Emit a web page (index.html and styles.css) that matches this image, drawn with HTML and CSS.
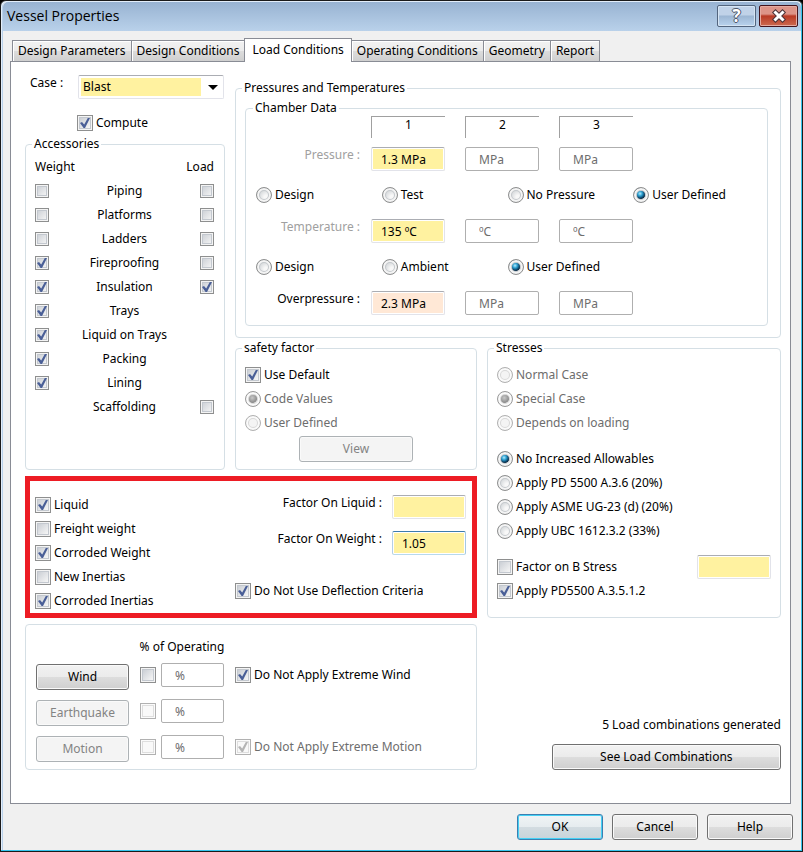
FILE: index.html
```html
<!DOCTYPE html>
<html lang="en">
<head>
<meta charset="utf-8">
<title>Vessel Properties</title>
<link rel="stylesheet" href="styles.css">
</head>
<body>
<div class="window">
  <header class="titlebar">
    <h1>Vessel Properties</h1>
    <button type="button" class="caption-btn" aria-label="Help">?</button>
    <button type="button" class="caption-btn close" aria-label="Close">
      <svg width="16" height="14" viewBox="0 0 16 14"><path d="M4.500 3.500 L11.500 10.500 M11.500 3.500 L4.500 10.500" stroke="#4b3338" stroke-width="5" stroke-linecap="square"/><path d="M4.500 3.500 L11.500 10.500 M11.500 3.500 L4.500 10.500" stroke="#fff" stroke-width="3" stroke-linecap="square"/></svg>
    </button>
  </header>

  <nav class="tabs" role="tablist">
    <button type="button" role="tab" class="tab">Design Parameters</button>
    <button type="button" role="tab" class="tab">Design Conditions</button>
    <button type="button" role="tab" class="tab active" aria-selected="true">Load Conditions</button>
    <button type="button" role="tab" class="tab">Operating Conditions</button>
    <button type="button" role="tab" class="tab">Geometry</button>
    <button type="button" role="tab" class="tab">Report</button>
  </nav>

  <main class="panel">
    <div class="side">
      <div class="case-row">
        <label for="case">Case :</label>
        <span class="combo"><select id="case"><option>Blast</option></select></span>
      </div>
      <label class="option compute"><input type="checkbox" checked>Compute</label>
      <fieldset class="accessories">
        <legend>Accessories</legend>
        <table>
          <thead><tr><th>Weight</th><th></th><th>Load</th></tr></thead>
          <tbody>
            <tr><td><input type="checkbox" aria-label="Piping weight"></td><td>Piping</td><td><input type="checkbox" aria-label="Piping load"></td></tr>
            <tr><td><input type="checkbox" aria-label="Platforms weight"></td><td>Platforms</td><td><input type="checkbox" aria-label="Platforms load"></td></tr>
            <tr><td><input type="checkbox" aria-label="Ladders weight"></td><td>Ladders</td><td><input type="checkbox" aria-label="Ladders load"></td></tr>
            <tr><td><input type="checkbox" aria-label="Fireproofing weight" checked></td><td>Fireproofing</td><td><input type="checkbox" aria-label="Fireproofing load"></td></tr>
            <tr><td><input type="checkbox" aria-label="Insulation weight" checked></td><td>Insulation</td><td><input type="checkbox" aria-label="Insulation load" checked></td></tr>
            <tr><td><input type="checkbox" aria-label="Trays weight" checked></td><td>Trays</td><td></td></tr>
            <tr><td><input type="checkbox" aria-label="Liquid on Trays weight" checked></td><td>Liquid on Trays</td><td></td></tr>
            <tr><td><input type="checkbox" aria-label="Packing weight" checked></td><td>Packing</td><td></td></tr>
            <tr><td><input type="checkbox" aria-label="Lining weight" checked></td><td>Lining</td><td></td></tr>
            <tr><td></td><td>Scaffolding</td><td><input type="checkbox" aria-label="Scaffolding load"></td></tr>
          </tbody>
        </table>
      </fieldset>
    </div>

    <fieldset class="pressures">
      <legend>Pressures and Temperatures</legend>
      <fieldset class="chamber">
        <legend>Chamber Data</legend>
        <div class="chamber-row head">
          <span class="row-label"></span>
          <div class="fields"><span class="col-head">1</span><span class="col-head">2</span><span class="col-head">3</span></div>
        </div>
        <div class="chamber-row">
          <label class="row-label muted" for="p1">Pressure :</label>
          <div class="fields">
            <input class="field" type="text" id="p1" value="1.3 MPa">
            <input class="field unit" type="text" aria-label="Pressure 2" value="MPa" disabled>
            <input class="field unit" type="text" aria-label="Pressure 3" value="MPa" disabled>
          </div>
        </div>
        <div class="radio-row">
          <label class="option"><input type="radio" name="pressure">Design</label>
          <label class="option"><input type="radio" name="pressure">Test</label>
          <label class="option"><input type="radio" name="pressure">No Pressure</label>
          <label class="option"><input type="radio" name="pressure" checked>User Defined</label>
        </div>
        <div class="chamber-row">
          <label class="row-label muted" for="t1">Temperature :</label>
          <div class="fields">
            <input class="field" type="text" id="t1" value="135 ºC">
            <input class="field unit" type="text" aria-label="Temperature 2" value="ºC" disabled>
            <input class="field unit" type="text" aria-label="Temperature 3" value="ºC" disabled>
          </div>
        </div>
        <div class="radio-row">
          <label class="option"><input type="radio" name="temperature">Design</label>
          <label class="option"><input type="radio" name="temperature">Ambient</label>
          <label class="option"><input type="radio" name="temperature" checked>User Defined</label>
        </div>
        <div class="chamber-row">
          <label class="row-label" for="o1">Overpressure :</label>
          <div class="fields">
            <input class="field over" type="text" id="o1" value="2.3 MPa">
            <input class="field unit" type="text" aria-label="Overpressure 2" value="MPa" disabled>
            <input class="field unit" type="text" aria-label="Overpressure 3" value="MPa" disabled>
          </div>
        </div>
      </fieldset>
    </fieldset>

    <fieldset class="safety">
      <legend>safety factor</legend>
      <label class="option"><input type="checkbox" checked>Use Default</label>
      <label class="option"><input type="radio" name="safety" checked disabled>Code Values</label>
      <label class="option"><input type="radio" name="safety" disabled>User Defined</label>
      <button type="button" class="btn view" disabled>View</button>
    </fieldset>

    <fieldset class="stresses">
      <legend>Stresses</legend>
      <div class="group">
        <label class="option"><input type="radio" name="stress" disabled>Normal Case</label>
        <label class="option"><input type="radio" name="stress" checked disabled>Special Case</label>
        <label class="option"><input type="radio" name="stress" disabled>Depends on loading</label>
      </div>
      <div class="group">
        <label class="option"><input type="radio" name="allow" checked>No Increased Allowables</label>
        <label class="option"><input type="radio" name="allow">Apply PD 5500 A.3.6 (20%)</label>
        <label class="option"><input type="radio" name="allow">Apply ASME UG-23 (d) (20%)</label>
        <label class="option"><input type="radio" name="allow">Apply UBC 1612.3.2 (33%)</label>
      </div>
      <div class="group">
        <div class="split">
          <label class="option"><input type="checkbox">Factor on B Stress</label>
          <input class="field" type="text" aria-label="Factor on B Stress value">
        </div>
        <label class="option"><input type="checkbox" checked>Apply PD5500 A.3.5.1.2</label>
      </div>
    </fieldset>

    <section class="weights">
      <div>
        <label class="option"><input type="checkbox" checked>Liquid</label>
        <label class="option"><input type="checkbox">Freight weight</label>
        <label class="option"><input type="checkbox" checked>Corroded Weight</label>
        <label class="option"><input type="checkbox">New Inertias</label>
        <label class="option"><input type="checkbox" checked>Corroded Inertias</label>
      </div>
      <div class="factors">
        <div class="factor"><label for="fl">Factor On Liquid :</label><input class="field" type="text" id="fl"></div>
        <div class="factor"><label for="fw">Factor On Weight :</label><input class="field current" type="text" id="fw" value="1.05"></div>
        <label class="option"><input type="checkbox" checked>Do Not Use Deflection Criteria</label>
      </div>
    </section>

    <section class="forces">
      <span></span><span class="forces-head">% of Operating</span><span></span>
      <button type="button" class="btn">Wind</button>
      <span class="percent"><input type="checkbox" aria-label="Use wind percentage"><input class="field unit" type="text" aria-label="Wind percentage" value="%" disabled></span>
      <label class="option"><input type="checkbox" checked>Do Not Apply Extreme Wind</label>
      <button type="button" class="btn" disabled>Earthquake</button>
      <span class="percent"><input type="checkbox" aria-label="Use earthquake percentage" disabled><input class="field unit" type="text" aria-label="Earthquake percentage" value="%" disabled></span>
      <span></span>
      <button type="button" class="btn" disabled>Motion</button>
      <span class="percent"><input type="checkbox" aria-label="Use motion percentage" disabled><input class="field unit" type="text" aria-label="Motion percentage" value="%" disabled></span>
      <label class="option"><input type="checkbox" checked disabled>Do Not Apply Extreme Motion</label>
    </section>

    <section class="summary">
      <p>5 Load combinations generated</p>
      <button type="button" class="btn">See Load Combinations</button>
    </section>
  </main>

  <footer class="actions">
    <button type="button" class="btn default">OK</button>
    <button type="button" class="btn">Cancel</button>
    <button type="button" class="btn">Help</button>
  </footer>
</div>
</body>
</html>
```
FILE: styles.css
```css
* { box-sizing: border-box; }

body {
  margin: 0;
  background: #000;
}

body, button, input, select {
  font-family: "Noto Sans", "Open Sans", sans-serif;
  font-size: 12px;
  line-height: 16px;
  color: #000;
}

.window {
  display: flex;
  flex-direction: column;
  min-height: 100vh;
  border: 1px solid #1a1a1a;
  border-radius: 6px 6px 0 0;
  background: #f0f0f0;
  box-shadow: inset -1px -1px #35c5ee, inset 1px 1px #e3eefa, inset 2px 0 #b9d1ea;
}

/* Title bar */
.titlebar {
  display: flex;
  gap: 3px;
  height: 29px;
  margin: 1px 1px 0 2px;
  padding: 3px 3px 0 4px;
  border-radius: 5px 5px 0 0;
  background: linear-gradient(#98b3d2, #b9d1ea);
}
.titlebar h1 {
  flex: 1;
  margin: 0;
  font: 400 14px/22px "Open Sans", "Noto Sans", sans-serif;
}
.caption-btn {
  display: flex;
  align-items: center;
  justify-content: center;
  width: 39px;
  height: 22px;
  padding: 0;
  border: 1px solid #53657e;
  border-radius: 2px;
  background: linear-gradient(#c0d2e8 45%, #9cb6d3 50%, #b9d3ee);
  box-shadow: inset 0 0 0 1px #d5e4f3;
  color: #fff;
  font: 700 17px/20px "Open Sans", sans-serif;
  text-shadow: 1px 0 #4c5567, -1px 0 #4c5567, 0 1px #4c5567, 0 -1px #4c5567;
}
.caption-btn.close {
  border-color: #43131c;
  background: linear-gradient(#dd9488 40%, #b93a25 50%, #cc6a50);
  box-shadow: inset 0 0 0 1px #e5aaa0;
}

/* Tabs */
.tabs {
  display: flex;
  align-items: flex-end;
  margin: 7px 12px 0 11px;
}
.tab {
  height: 21px;
  padding: 0 5px;
  border: 1px solid #898c95;
  border-bottom: 0;
  background: linear-gradient(#f2f2f2, #ebebeb 50%, #dddddd 50%, #cfcfcf);
  box-shadow: inset 1px 1px #fff;
  white-space: nowrap;
}
.tab + .tab { margin-left: -1px; }
.tab.active {
  height: 24px;
  margin: 0 0 -1px -1px;
  padding: 0 7px 1px;
  background: #fff;
  z-index: 1;
}

.panel {
  display: grid;
  grid-template-columns: 200fr 242fr 294fr;
  grid-template-rows: auto auto auto auto 1fr;
  gap: 2px 10px;
  flex: 1;
  margin: 0 11px 0 9px;
  padding: 13px 9px 0 14px;
  border: 1px solid #898c95;
  background: #fff;
}

fieldset {
  min-width: 0;
  margin: 0;
  padding: 0;
  border: 1px solid #d5dfe5;
  border-radius: 4px;
}
legend {
  margin-left: -3px;
  padding: 0 2px;
  line-height: 16px;
}

/* Check boxes and radio buttons */
input[type="checkbox"], input[type="radio"] {
  appearance: none;
  display: block;
  flex: none;
  width: 16px;
  height: 16px;
  margin: 0;
  border: 1px solid #8e8f8f;
}
input[type="checkbox"] {
  padding: 2px;
  background: linear-gradient(135deg, #cbcfd5, #f6f6f6) content-box, #f4f4f4;
  box-shadow: inset 0 0 0 1px #f4f4f4, inset 0 0 0 2px #c3c8cf;
}
input[type="checkbox"]:checked::before {
  content: "";
  display: block;
  height: 100%;
  background: #4a5f97;
  clip-path: polygon(0 50%, 20% 40%, 42% 65%, 78% 0, 100% 0, 50% 100%, 36% 100%);
}
input[type="radio"] {
  border-radius: 50%;
  background: radial-gradient(circle at 65% 65%, #f8f8f8 15%, #cfd3d6 65%);
  box-shadow: inset 0 0 0 2px #f4f4f4, inset 0 0 0 3px #c4c8cc;
}
input[type="radio"]:checked {
  background: radial-gradient(circle at 43% 40%, #b5ecff 0, #2b9fd0 20%, #0d4468 38%, #0c2a42 46%, #e0e4e8 52%);
}
input:disabled[type="checkbox"], input:disabled[type="radio"] { border-color: #b1b1b1; }
input:disabled[type="checkbox"] {
  background: #f9f9f9;
  box-shadow: inset 0 0 0 1px #fbfbfb, inset 0 0 0 2px #dedede;
}
input:disabled[type="checkbox"]::before { background: #b5b5b5; }
input:disabled[type="radio"] {
  background: #f4f4f4;
  box-shadow: inset 0 0 0 2px #fafafa, inset 0 0 0 3px #d8d8d8;
}
input:disabled[type="radio"]:checked {
  border-color: #9a9a9a;
  background: radial-gradient(circle at 45% 42%, #c8c8c8 0, #8c8c8c 42%, #f4f4f4 50%);
}

.option {
  display: flex;
  align-items: center;
  gap: 3px;
  height: 24px;
  white-space: nowrap;
}
.option:has(input:disabled) { color: #6d6d6d; }

/* Text fields */
.field {
  flex: none;
  width: 74px;
  height: 24px;
  padding: 0 9px;
  border: 1px solid #e2e3ea;
  border-top-color: #abadb3;
  border-radius: 2px;
  background: #fff2a0;
  box-shadow: inset 0 0 0 1px #fff;
}
.field.over { background: #ffe8d6; }
.field.current { border-color: #3d7bad #a4c9e3 #b7d9ed #b5cfe7; }
.field.unit {
  padding: 0 13px;
  border-color: #afafaf;
  background: #fff;
  color: #6d6d6d;
}

/* Push buttons */
.btn {
  height: 26px;
  padding: 0 8px;
  border: 1px solid #707070;
  border-radius: 3px;
  background: linear-gradient(#f2f2f2, #ebebeb 50%, #dddddd 50%, #cfcfcf);
  box-shadow: inset 0 0 0 1px #fafafa;
}
.btn:disabled {
  border-color: #adb2b5;
  background: #f4f4f4;
  color: #838383;
}
.btn.default {
  border-color: #3c7fb1;
  background: linear-gradient(#f0f4f6, #e6ecef 50%, #d3dce1 50%, #c8d4da);
  box-shadow: inset 0 0 0 1px #45d1f5;
}

/* Case and accessories */
.side {
  grid-area: 1 / 1 / 3 / 2;
  display: flex;
  flex-direction: column;
}
.case-row {
  display: flex;
  gap: 11px;
  padding: 0 1px 0 5px;
}
.combo {
  position: relative;
  flex: 0 1 146px;
  margin-left: auto;
}
.combo select {
  appearance: none;
  display: block;
  width: 100%;
  height: 24px;
  padding: 0 24px 0 4px;
  border: 1px solid #e2e3ea;
  border-top-color: #abadb3;
  border-radius: 2px;
  background: linear-gradient(#fff2a0, #fff2a0) 2px 2px / calc(100% - 24px) 18px no-repeat #fff;
}
.combo::after {
  content: "";
  position: absolute;
  top: 10px;
  right: 6px;
  border: 5px solid transparent;
  border-top-color: #000;
  border-bottom: 0;
  pointer-events: none;
}
.compute {
  margin: 12px 0 0 52px;
}
.accessories {
  flex: 1;
  margin-top: 1px;
  padding: 3px 10px 0 9px;
}
.accessories table {
  width: 100%;
  border-collapse: collapse;
}
.accessories th, .accessories td {
  height: 24px;
  padding: 0;
  font-weight: 400;
  text-align: center;
}
.accessories th:first-child { width: 44px; text-align: left; }
.accessories th:last-child { width: 44px; text-align: right; }
.accessories input[type="checkbox"] {
  width: 14px;
  height: 14px;
  padding: 1px;
}
.accessories td:last-child input { margin-left: auto; }

/* Pressures and temperatures */
.pressures {
  grid-area: 1 / 2 / 2 / 4;
  margin-top: 5px;
  padding: 4px 12px 11px 9px;
}
.chamber { padding: 0 8px 10px 10px; }
.chamber-row {
  display: flex;
  gap: 11px;
  margin-bottom: 12px;
}
.chamber-row.head { margin-bottom: 9px; }
.chamber-row:last-child { margin-bottom: 0; }
.row-label {
  width: 104px;
  text-align: right;
  white-space: nowrap;
}
.muted { color: #a0a0a0; }
.fields { display: flex; gap: 20px; }
.col-head {
  width: 74px;
  height: 22px;
  border: 1px solid #a0a0a0;
  border-width: 1px 0 0 1px;
  text-align: center;
}
.radio-row {
  display: grid;
  grid-template-columns: repeat(4, 1fr);
  margin-bottom: 12px;
}

/* Safety factor */
.safety {
  grid-area: 2 / 2;
  padding: 7px 9px;
}
.safety .view {
  display: block;
  width: 114px;
  margin: 1px auto 0;
}

/* Stresses */
.stresses {
  grid-area: 2 / 3 / 4 / 4;
  padding: 7px 9px 0;
}
.group { margin-bottom: 12px; }
.split {
  display: flex;
  justify-content: space-between;
}

/* Liquid and weight factors */
.weights {
  grid-area: 3 / 1 / 4 / 3;
  display: grid;
  grid-template-columns: 200fr 231fr;
  margin-top: 4px;
  padding: 12px 6px 0 5px;
  border: 5px solid #ed1c24;
}
.factors { padding-top: 2px; }
.factor {
  display: flex;
  justify-content: flex-end;
  gap: 10px;
  margin-bottom: 12px;
}
.factors .option { margin-top: 24px; }

/* Wind, earthquake and motion */
.forces {
  grid-area: 4 / 1 / 5 / 3;
  display: grid;
  grid-template-columns: 93px 84px 1fr;
  grid-template-rows: 24px 36px 36px 34px;
  align-items: start;
  gap: 0 11px;
  margin-top: 4px;
  padding: 14px 10px 0;
  border: 1px solid #d5dfe5;
  border-radius: 4px;
}
.forces-head {
  justify-self: center;
  white-space: nowrap;
}
.forces .btn { margin-top: 1px; }
.percent {
  display: flex;
  align-items: center;
  gap: 5px;
  height: 24px;
}
.percent .field {
  flex: 1;
  min-width: 0;
}

.summary {
  grid-area: 4 / 3;
  display: flex;
  flex-direction: column;
  align-items: flex-end;
  justify-content: flex-end;
  gap: 11px;
}
.summary p { margin: 0; }
.summary .btn {
  width: 78%;
}

/* Dialog buttons */
.actions {
  display: flex;
  justify-content: flex-end;
  gap: 9px;
  padding: 10px 9px 11px;
}
.actions .btn { width: 86px; }
```
